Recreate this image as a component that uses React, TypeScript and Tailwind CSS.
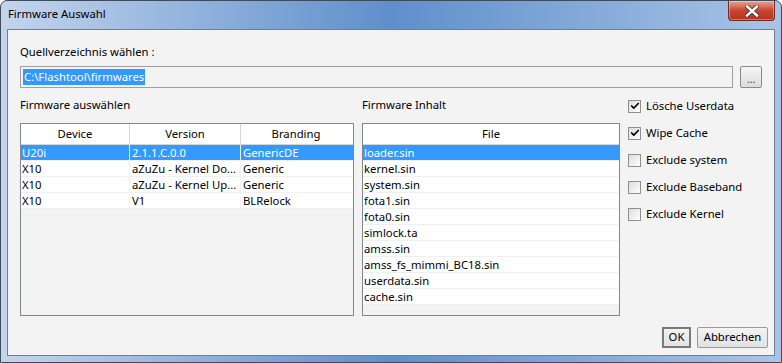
import { Check } from "lucide-react";

const firmwares = [
  { device: "U20i", version: "2.1.1.C.0.0", branding: "GenericDE", selected: true },
  { device: "X10", version: "aZuZu - Kernel Do...", branding: "Generic" },
  { device: "X10", version: "aZuZu - Kernel Up...", branding: "Generic" },
  { device: "X10", version: "V1", branding: "BLRelock" },
];

const files = [
  "loader.sin",
  "kernel.sin",
  "system.sin",
  "fota1.sin",
  "fota0.sin",
  "simlock.ta",
  "amss.sin",
  "amss_fs_mimmi_BC18.sin",
  "userdata.sin",
  "cache.sin",
];

const options = [
  { label: "Lösche Userdata", checked: true },
  { label: "Wipe Cache", checked: true },
  { label: "Exclude system", checked: false },
  { label: "Exclude Baseband", checked: false },
  { label: "Exclude Kernel", checked: false },
];

function CloseButton() {
  return (
    <div className="w-[47px] h-[20px] rounded-b-[4px] border border-t-0 border-[#6b2a22] bg-gradient-to-b from-[#e8a493] via-[#c9452f] to-[#b8311d] flex items-center justify-center shadow-[inset_0_0_0_1px_rgba(255,255,255,0.35)]">
      <svg width="14" height="12" viewBox="0 0 14 12">
        <path
          d="M2 1.5 L12 10.5 M12 1.5 L2 10.5"
          stroke="#3a3a3a"
          strokeWidth="4"
          strokeLinecap="square"
        />
        <path
          d="M2 1.5 L12 10.5 M12 1.5 L2 10.5"
          stroke="#ffffff"
          strokeWidth="2.4"
          strokeLinecap="square"
        />
      </svg>
    </div>
  );
}

function CheckBox({ checked }: { checked: boolean }) {
  return (
    <div className="w-[13px] h-[13px] border border-[#8e8f8f] bg-gradient-to-br from-[#dcdcdc] to-[#ffffff] flex items-center justify-center">
      {checked && <Check className="w-[10px] h-[10px] text-black" strokeWidth={4} />}
    </div>
  );
}

export default function App() {
  return (
    <div
      className="w-[782px] h-[363px] flex flex-col rounded-t-[7px] border border-[#3c4b5e] bg-gradient-to-r from-[#c3d5ec] via-[#5f8fcb] to-[#a9c4e6] text-[11.3px] text-black"
      style={{ fontFamily: '"Noto Sans", "Open Sans", sans-serif' }}
    >
      <div className="h-[28px] flex items-start justify-between pl-[7px] pr-[6px]">
        <span className="mt-[5px] text-[11.3px] text-black">Firmware Auswahl</span>
        <CloseButton />
      </div>

      <div className="mx-[6px] h-[327px] border border-[#6e7f96] bg-[#f3f3f3] flex flex-col px-[12px] bg-clip-padding">
        <div className="mt-[14px] leading-[16px]">Quellverzeichnis wählen :</div>

        <div className="mt-[6px] flex gap-[7px]">
          <div className="w-[720px] h-[22px] border border-[#a0a0a0] flex items-center px-[2px]">
            <span className="bg-[#3399ff] text-white leading-[16px] px-[1px]">C:\Flashtool\firmwares</span>
          </div>
          <div className="w-[22px] h-[22px] border border-[#8a8a8a] rounded-[2px] bg-gradient-to-b from-[#f6f6f6] to-[#dcdcdc] flex items-end justify-center pb-[3px] text-[10px] leading-[10px] text-[#3b2d7a]">
            ...
          </div>
        </div>

        <div className="mt-[9px] flex">
          <div className="w-[334px] flex flex-col">
            <div className="leading-[16px]">Firmware auswählen</div>
            <div className="mt-[10px] h-[193px] border border-[#828790] bg-[#f3f3f3] flex flex-col">
              <div className="h-[21px] flex bg-white border-b border-[#d5d5d5]">
                <div className="w-[109px] border-r border-[#d5d5d5] flex items-center justify-center">Device</div>
                <div className="w-[111px] border-r border-[#d5d5d5] flex items-center justify-center">Version</div>
                <div className="w-[110px] flex items-center justify-center">Branding</div>
              </div>
              {firmwares.map((f, i) => (
                <div
                  key={i}
                  className={`h-[16px] flex leading-[16px] ${f.selected ? "bg-[#3399ff] text-white" : "bg-white"} border-b border-[#f0f0f0]`}
                >
                  <div className="w-[109px] pl-[1px] border-r border-[#f0f0f0] whitespace-nowrap">{f.device}</div>
                  <div className="w-[111px] pl-[2px] border-r border-[#f0f0f0] whitespace-nowrap">{f.version}</div>
                  <div className="w-[110px] pl-[2px] whitespace-nowrap">{f.branding}</div>
                </div>
              ))}
            </div>
          </div>

          <div className="ml-[8px] w-[258px] flex flex-col">
            <div className="leading-[16px]">Firmware Inhalt</div>
            <div className="mt-[10px] h-[193px] border border-[#828790] bg-[#f3f3f3] flex flex-col">
              <div className="h-[21px] flex items-center justify-center bg-white border-b border-[#d5d5d5]">File</div>
              {files.map((f, i) => (
                <div
                  key={f}
                  className={`h-[16px] leading-[16px] pl-[1px] border-b border-[#f0f0f0] ${i === 0 ? "bg-[#3399ff] text-white" : "bg-white"}`}
                >
                  {f}
                </div>
              ))}
            </div>
          </div>

          <div className="ml-[8px] flex flex-col gap-[11px] mt-[1px]">
            {options.map((o) => (
              <div key={o.label} className="h-[16px] flex items-center gap-[5px]">
                <CheckBox checked={o.checked} />
                <span className="leading-[16px]">{o.label}</span>
              </div>
            ))}
          </div>
        </div>

        <div className="mt-[11px] flex justify-end gap-[6px]">
          <div className="w-[29px] h-[21px] border-2 border-[#7a7a7a] bg-gradient-to-b from-[#f3f3f3] to-[#e2e2e2] flex items-center justify-center">OK</div>
          <div className="w-[71px] h-[21px] border border-[#9a9a9a] rounded-[2px] bg-gradient-to-b from-[#f3f3f3] to-[#e2e2e2] flex items-center justify-center mr-[-6px]">Abbrechen</div>
        </div>
      </div>
    </div>
  );
}
